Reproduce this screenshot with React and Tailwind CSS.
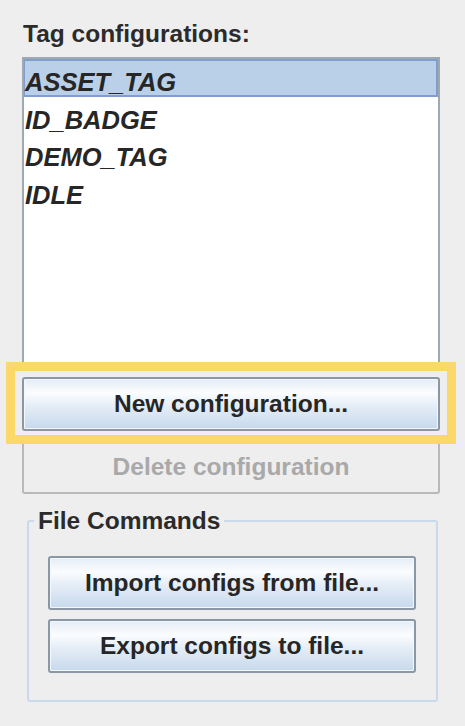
const FONT = { fontFamily: '"Liberation Sans", Arial, sans-serif' }

const TAGS = ['ASSET_TAG', 'ID_BADGE', 'DEMO_TAG', 'IDLE']

function SwingButton({ children, className = '' }) {
  return (
    <button
      className={`h-[54px] w-full rounded-[3px] border-2 border-[#8a97a4] bg-[linear-gradient(to_bottom,#e4ecf5_0%,#fbfdff_28%,#e6eef7_52%,#c6d9ec_100%)] text-[24.5px] font-bold text-[#262626] shadow-[inset_0_0_0_1px_#f4f8fc] ${className}`}>
      {children}
    </button>
  )
}

export default function App() {
  const selected = 'ASSET_TAG'

  return (
    <div className="w-[465px] h-[726px] bg-[#eeeeee] pl-[22px] pt-[20px] overflow-hidden" style={FONT}>
      <p className="h-[28px] leading-[28px] text-[24.5px] font-bold text-[#2b2b2b] pl-[1px]">Tag configurations:</p>

      <div className="mt-[9px] w-[418px] h-[313px] border-2 border-[#a0a8b0] bg-white">
        {TAGS.map(t => (
          <div key={t}
            className={`h-[37.5px] pt-[6px] leading-[30px] text-[25.5px] font-bold italic text-[#262626]
              ${t === selected ? 'bg-[#b9d0e8] border-2 border-l-[1px] border-[#7f9ecb]' : 'border-2 border-l-[1px] border-transparent'}`}>
            {t}
          </div>
        ))}
      </div>

      <div className="relative mt-[7px] w-[418px]">
        <SwingButton>New configuration...</SwingButton>
        {/* highlight frame drawn over the button */}
        <div className="absolute left-[-16px] right-[-16px] top-[-15px] bottom-[-13px] border-[9px] border-[#fad86a] pointer-events-none" />
      </div>

      <button disabled
        className="mt-[9px] h-[54px] w-[418px] rounded-[3px] border-2 border-[#b9b9b9] bg-[#eeeeee] text-[24.5px] font-bold text-[#a9a9a9]">
        Delete configuration
      </button>

      <fieldset className="mt-[13px] ml-[5px] w-[411px] rounded-[3px] border-2 border-[#cbdaea] pl-[5px] pb-[27px]">
        <legend className="px-[4px] h-[28px] leading-[28px] text-[24.5px] font-bold text-[#2b2b2b]">File Commands</legend>
        <div className="mt-[21px] ml-[14px] mr-[20px] flex flex-col gap-[9px]">
          <SwingButton>Import configs from file...</SwingButton>
          <SwingButton>Export configs to file...</SwingButton>
        </div>
      </fieldset>
    </div>
  )
}
